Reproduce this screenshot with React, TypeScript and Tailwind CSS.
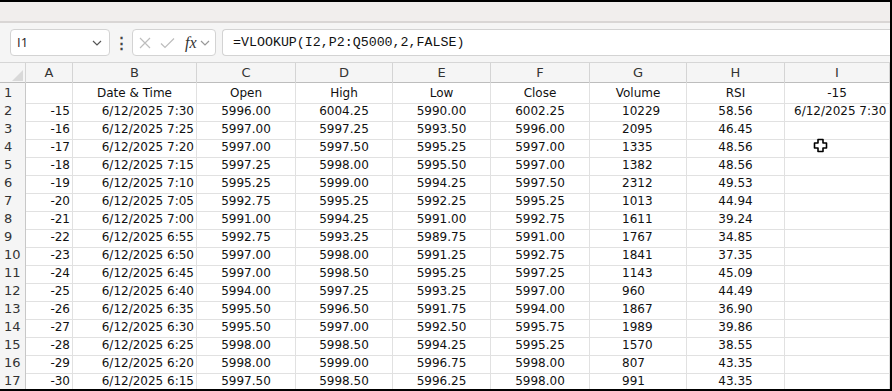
import React from "react";

const rows: string[][] = [
  ["-15", "6/12/2025 7:30", "5996.00", "6004.25", "5990.00", "6002.25", "10229", "58.56", "6/12/2025 7:30"],
  ["-16", "6/12/2025 7:25", "5997.00", "5997.25", "5993.50", "5996.00", "2095", "46.45", ""],
  ["-17", "6/12/2025 7:20", "5997.00", "5997.50", "5995.25", "5997.00", "1335", "48.56", ""],
  ["-18", "6/12/2025 7:15", "5997.25", "5998.00", "5995.50", "5997.00", "1382", "48.56", ""],
  ["-19", "6/12/2025 7:10", "5995.25", "5999.00", "5994.25", "5997.50", "2312", "49.53", ""],
  ["-20", "6/12/2025 7:05", "5992.75", "5995.25", "5992.25", "5995.25", "1013", "44.94", ""],
  ["-21", "6/12/2025 7:00", "5991.00", "5994.25", "5991.00", "5992.75", "1611", "39.24", ""],
  ["-22", "6/12/2025 6:55", "5992.75", "5993.25", "5989.75", "5991.00", "1767", "34.85", ""],
  ["-23", "6/12/2025 6:50", "5997.00", "5998.00", "5991.25", "5992.75", "1841", "37.35", ""],
  ["-24", "6/12/2025 6:45", "5997.00", "5998.50", "5995.25", "5997.25", "1143", "45.09", ""],
  ["-25", "6/12/2025 6:40", "5994.00", "5997.25", "5993.25", "5997.00", "960", "44.49", ""],
  ["-26", "6/12/2025 6:35", "5995.50", "5996.50", "5991.75", "5994.00", "1867", "36.90", ""],
  ["-27", "6/12/2025 6:30", "5995.50", "5997.00", "5992.50", "5995.75", "1989", "39.86", ""],
  ["-28", "6/12/2025 6:25", "5998.00", "5998.50", "5994.25", "5995.25", "1570", "38.55", ""],
  ["-29", "6/12/2025 6:20", "5998.00", "5999.00", "5996.75", "5998.00", "807", "43.35", ""],
  ["-30", "6/12/2025 6:15", "5997.50", "5998.50", "5996.25", "5998.00", "991", "43.35", ""],
];

const header = ["", "Date & Time", "Open", "High", "Low", "Close", "Volume", "RSI", "-15"];
const letters = ["A", "B", "C", "D", "E", "F", "G", "H", "I"];

// alignment per column A..I for data rows
const align = [
  "justify-end pr-[2px]",
  "justify-end pr-[2px]",
  "justify-center",
  "justify-center",
  "justify-center",
  "justify-center",
  "justify-start pl-[32px]",
  "justify-center",
  "justify-start pl-[9px]",
];

const gridCols = "grid grid-cols-[26px_47px_124px_99px_97px_98px_99px_97px_98px_1fr]";

const Chevron = ({ className }: { className?: string }) => (
  <svg width="10" height="6" viewBox="0 0 10 6" className={className}>
    <path d="M1 1 L5 5 L9 1" fill="none" stroke="currentColor" strokeWidth="1.2" />
  </svg>
);

const Cursor = () => (
  <svg width="15" height="15" viewBox="0 0 15 15" className="absolute left-[813px] top-[136px]">
    <path
      d="M5 1.5 H10 V5 H13.5 V10 H10 V13.5 H5 V10 H1.5 V5 H5 Z"
      fill="#fff"
      stroke="#000"
      strokeWidth="1.6"
      strokeLinejoin="round"
    />
  </svg>
);

export default function App() {
  return (
    <div
      className="relative h-[391px] w-[892px] overflow-hidden border-t-2 border-r-2 border-b-2 border-black bg-white"
      style={{ fontFamily: "'DejaVu Sans', sans-serif" }}
    >
      {/* ribbon remnant */}
      <div className="h-[19px] bg-[#f1eeed]" />
      <div className="h-[2px] bg-[#d9d6d5]" />

      {/* formula bar */}
      <div className="flex h-[40px] items-center border-b border-[#d6d6d6] bg-[#f5f5f5] pl-[10px]" style={{ fontFamily: "'Open Sans', sans-serif" }}>
        <div className="flex h-[27px] w-[100px] items-center justify-between rounded-[4px] border border-[#d3d3d3] bg-white pl-[6px] pr-[7px]">
          <span className="text-[13px] text-[#222]">I1</span>
          <Chevron className="text-[#555]" />
        </div>
        <div className="flex w-[22px] justify-center text-[15px] font-bold leading-none text-[#444]">⋮</div>
        <div className="flex h-[27px] w-[84px] items-center gap-[7px] rounded-[4px] border border-[#d3d3d3] bg-white pl-[6px]">
          <svg width="12" height="12" viewBox="0 0 12 12">
            <path d="M1 1 L11 11 M11 1 L1 11" stroke="#bdbdbd" strokeWidth="1.2" />
          </svg>
          <svg width="15" height="12" viewBox="0 0 15 12" className="ml-[2px]">
            <path d="M1 6.5 L5 10.5 L14 1.5" fill="none" stroke="#bdbdbd" strokeWidth="1.2" />
          </svg>
          <span className="ml-[3px] text-[16px] italic leading-none text-[#333]" style={{ fontFamily: "'Liberation Serif', serif" }}>
            fx
          </span>
          <Chevron className="-ml-[4px] text-[#999]" />
        </div>
        <div
          className="ml-[6px] flex h-[27px] flex-1 items-center rounded-l-[4px] border border-r-0 border-[#d3d3d3] bg-white pl-[10px] text-[13.3px] text-[#111]"
          style={{ fontFamily: "'Liberation Mono', monospace" }}
        >
          =VLOOKUP(I2,P2:Q5000,2,FALSE)
        </div>
      </div>

      {/* column headers */}
      <div className={`${gridCols} h-[20px] border-b border-[#bdbdbd] bg-[#f5f5f5] text-[13px] text-[#333]`}>
        <div className="relative border-r border-[#d4d4d4]">
          <div className="absolute bottom-[2px] right-[2px] h-0 w-0 border-b-[11px] border-l-[11px] border-b-[#d9d9d9] border-l-transparent" />
        </div>
        {letters.map((l) => (
          <div key={l} className="flex items-center justify-center border-r border-[#d4d4d4]">
            {l}
          </div>
        ))}
      </div>

      {/* rows */}
      {[header, ...rows].map((r, ri) => (
        <div key={ri} className={`${gridCols} h-[18px] text-[12px] text-[#111]`}>
          <div className="flex items-center border-r border-b border-[#c8c8c8] border-b-[#dcdcdc] bg-[#f5f5f5] pl-[4px] text-[13px] text-[#333]">
            {ri + 1}
          </div>
          {r.map((c, ci) => (
            <div
              key={ci}
              className={`flex items-center whitespace-nowrap border-r border-b border-[#e1e1e1] ${ri === 0 ? "justify-center" : align[ci]}`}
            >
              {c}
            </div>
          ))}
        </div>
      ))}

      <Cursor />
    </div>
  );
}
